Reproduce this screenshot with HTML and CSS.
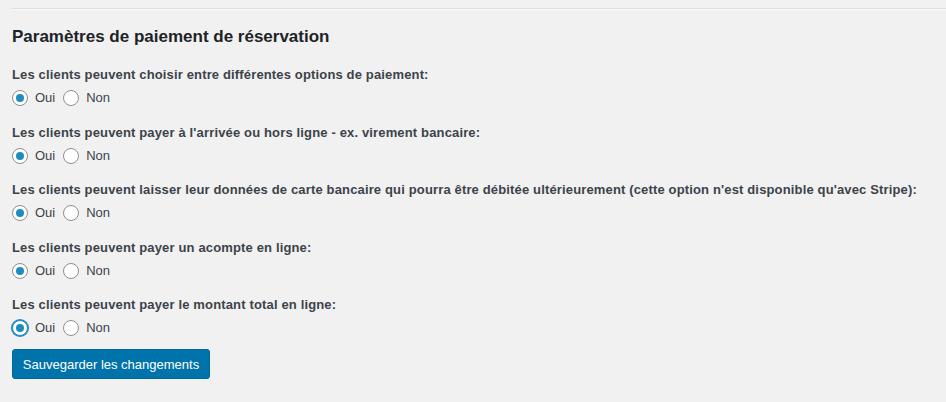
FILE: index.html
```html
<!DOCTYPE html>
<html lang="fr">
<head>
    <meta charset="UTF-8">
    <meta name="viewport" content="width=device-width, initial-scale=1.0">
    <title>Paramètres de paiement</title>
    <link rel="stylesheet" href="styles.css">
</head>
<body>
    <div class="wrap">
        <hr class="divider">

        <h2 class="section-title">Paramètres de paiement de réservation</h2>

        <form class="payment-form">
            <div class="field">
                <p class="field-label">Les clients peuvent choisir entre différentes options de paiement:</p>
                <div class="choices">
                    <label class="choice"><input type="radio" name="multiple" checked> Oui</label>
                    <label class="choice"><input type="radio" name="multiple"> Non</label>
                </div>
            </div>

            <div class="field">
                <p class="field-label">Les clients peuvent payer à l'arrivée ou hors ligne - ex. virement bancaire:</p>
                <div class="choices">
                    <label class="choice"><input type="radio" name="offline" checked> Oui</label>
                    <label class="choice"><input type="radio" name="offline"> Non</label>
                </div>
            </div>

            <div class="field">
                <p class="field-label">Les clients peuvent laisser leur données de carte bancaire qui pourra être débitée ultérieurement (cette option n'est disponible qu'avec Stripe):</p>
                <div class="choices">
                    <label class="choice"><input type="radio" name="card" checked> Oui</label>
                    <label class="choice"><input type="radio" name="card"> Non</label>
                </div>
            </div>

            <div class="field">
                <p class="field-label">Les clients peuvent payer un acompte en ligne:</p>
                <div class="choices">
                    <label class="choice"><input type="radio" name="deposit" checked> Oui</label>
                    <label class="choice"><input type="radio" name="deposit"> Non</label>
                </div>
            </div>

            <div class="field">
                <p class="field-label">Les clients peuvent payer le montant total en ligne:</p>
                <div class="choices">
                    <label class="choice"><input type="radio" name="full" class="is-focused" checked> Oui</label>
                    <label class="choice"><input type="radio" name="full"> Non</label>
                </div>
            </div>

            <button type="button" class="button-primary">Sauvegarder les changements</button>
        </form>
    </div>
</body>
</html>
```

FILE: styles.css
```css
* {
    margin: 0;
    padding: 0;
    box-sizing: border-box;
}

body {
    font-family: 'Liberation Sans', Arial, sans-serif;
    font-size: 13px;
    background-color: #f1f1f1;
    color: #3c434a;
}

.wrap {
    padding: 8px 0 0 12px;
}

.divider {
    border: none;
    border-top: 1px solid #dcdcde;
    border-bottom: 1px solid #fafafa;
    height: 0;
}

.section-title {
    font-size: 17px;
    font-weight: 700;
    color: #1d2327;
    line-height: 20px;
    margin-top: 17px;
}

.payment-form {
    margin-top: 19px;
}

.field {
    margin-bottom: 16.5px;
}

.field:last-of-type {
    margin-bottom: 12px;
}

.field-label {
    font-weight: 700;
    line-height: 18px;
    letter-spacing: 0.15px;
}

.choices {
    display: flex;
    gap: 8px;
    margin-top: 5px;
}

.choice {
    display: flex;
    align-items: center;
    gap: 7px;
    line-height: 18px;
}

input[type="radio"] {
    appearance: none;
    width: 16px;
    height: 16px;
    border: 1px solid #8c8f94;
    border-radius: 50%;
    background: #fff;
    display: grid;
    place-items: center;
    margin: 0;
}

input[type="radio"]:checked::before {
    content: "";
    width: 8px;
    height: 8px;
    border-radius: 50%;
    background: #1e8cbe;
}

input[type="radio"].is-focused {
    border-color: #1e8cbe;
    box-shadow: 0 0 0 1px #1e8cbe;
}

.button-primary {
    font-family: inherit;
    font-size: 13px;
    color: #fff;
    background: #0073aa;
    border: 1px solid #006799;
    border-radius: 3px;
    height: 30px;
    width: 198px;
    padding: 0;
    white-space: nowrap;
    cursor: pointer;
}
```
